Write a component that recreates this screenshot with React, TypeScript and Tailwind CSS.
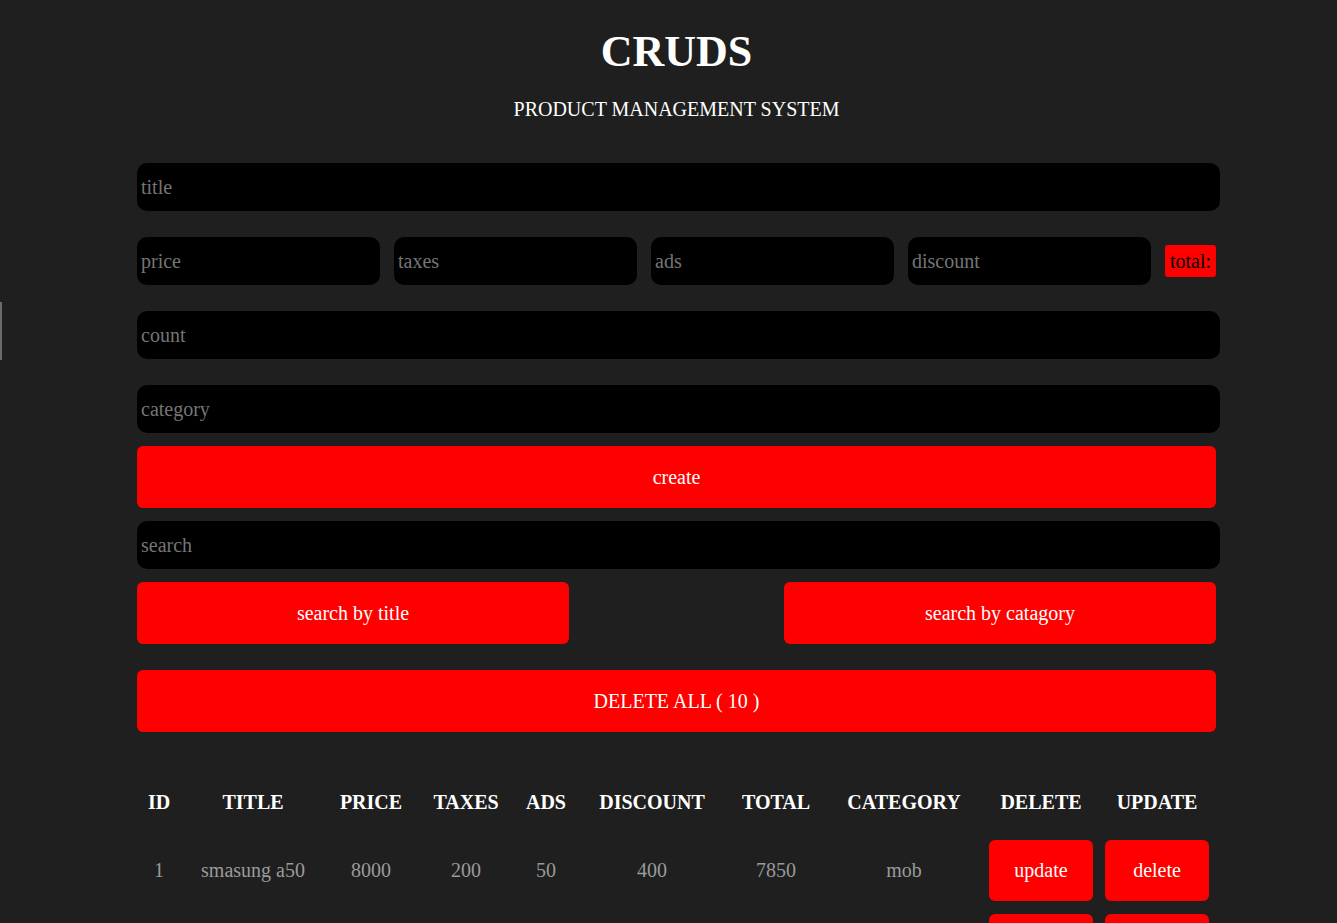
import React from "react";

const serif = { fontFamily: '"Liberation Serif", "Times New Roman", serif' };

const columns = [
  { label: "ID", w: "w-[44px]" },
  { label: "TITLE", w: "w-[144px]" },
  { label: "PRICE", w: "w-[92px]" },
  { label: "TAXES", w: "w-[98px]" },
  { label: "ADS", w: "w-[62px]" },
  { label: "DISCOUNT", w: "w-[150px]" },
  { label: "TOTAL", w: "w-[98px]" },
  { label: "CATEGORY", w: "w-[158px]" },
  { label: "DELETE", w: "w-[116px]" },
  { label: "UPDATE", w: "w-[116px]" },
];

const products = Array.from({ length: 10 }, (_, i) => ({
  id: i + 1,
  title: "smasung a50",
  price: 8000,
  taxes: 200,
  ads: 50,
  discount: 400,
  total: 7850,
  category: "mob",
}));

function Field({ placeholder, className = "" }: { placeholder: string; className?: string }) {
  return (
    <input
      placeholder={placeholder}
      className={`h-[48px] rounded-[10px] bg-black px-[4px] text-[20px] text-white outline-none placeholder:text-[#757575] ${className}`}
      style={serif}
    />
  );
}

function RedButton({ children, className = "" }: { children: React.ReactNode; className?: string }) {
  return (
    <button
      className={`h-[62px] rounded-[6px] bg-[#ff0000] text-[20px] text-white ${className}`}
      style={serif}
    >
      {children}
    </button>
  );
}

export default function App() {
  return (
    <div className="relative min-h-[923px] bg-[#1f1f1f] text-white" style={serif}>
      {/* left edge marker */}
      <div className="absolute left-0 top-[302px] h-[58px] w-[2px] bg-[#6b6b6b]"></div>

      <div className="ml-[137px] w-[1079px] pt-[24px]">
        {/* Header */}
        <div className="text-center">
          <h1 className="text-[44px] font-bold leading-[56px]">CRUDS</h1>
          <p className="mt-[17px] text-[20px] leading-[24px]">PRODUCT MANAGEMENT SYSTEM</p>
        </div>

        {/* Inputs */}
        <div className="mt-[42px] flex flex-col">
          <Field placeholder="title" className="w-[1083px]" />

          <div className="mt-[26px] flex items-center gap-[14px]">
            <Field placeholder="price" className="w-[243px]" />
            <Field placeholder="taxes" className="w-[243px]" />
            <Field placeholder="ads" className="w-[243px]" />
            <Field placeholder="discount" className="w-[243px]" />
            <span className="rounded-[3px] bg-[#ff0000] px-[5px] text-[20px] leading-[32px] text-black">
              total:
            </span>
          </div>

          <Field placeholder="count" className="mt-[26px] w-[1083px]" />
          <Field placeholder="category" className="mt-[26px] w-[1083px]" />

          <RedButton className="mt-[13px] w-full">create</RedButton>

          <Field placeholder="search" className="mt-[13px] w-[1083px]" />

          <div className="mt-[13px] flex justify-between">
            <RedButton className="w-[432px]">search by title</RedButton>
            <RedButton className="w-[432px]">search by catagory</RedButton>
          </div>

          <RedButton className="mt-[26px] w-full">DELETE ALL ( 10 )</RedButton>
        </div>

        {/* Table */}
        <table className="mt-[39px] w-[1078px] table-fixed border-collapse text-[20px]">
          <thead>
            <tr className="h-[62px]">
              {columns.map((c) => (
                <th key={c.label} className={`${c.w} text-center font-bold text-white`}>
                  {c.label}
                </th>
              ))}
            </tr>
          </thead>
          <tbody>
            {products.map((p) => (
              <tr key={p.id} className="h-[74px] text-center text-[#9a9a9a]">
                <td>{p.id}</td>
                <td>{p.title}</td>
                <td>{p.price}</td>
                <td>{p.taxes}</td>
                <td>{p.ads}</td>
                <td>{p.discount}</td>
                <td>{p.total}</td>
                <td>{p.category}</td>
                <td>
                  <button className="h-[61px] w-[104px] rounded-[6px] bg-[#ff0000] text-[20px] text-white" style={serif}>
                    update
                  </button>
                </td>
                <td>
                  <button className="h-[61px] w-[104px] rounded-[6px] bg-[#ff0000] text-[20px] text-white" style={serif}>
                    delete
                  </button>
                </td>
              </tr>
            ))}
          </tbody>
        </table>
      </div>
    </div>
  );
}
